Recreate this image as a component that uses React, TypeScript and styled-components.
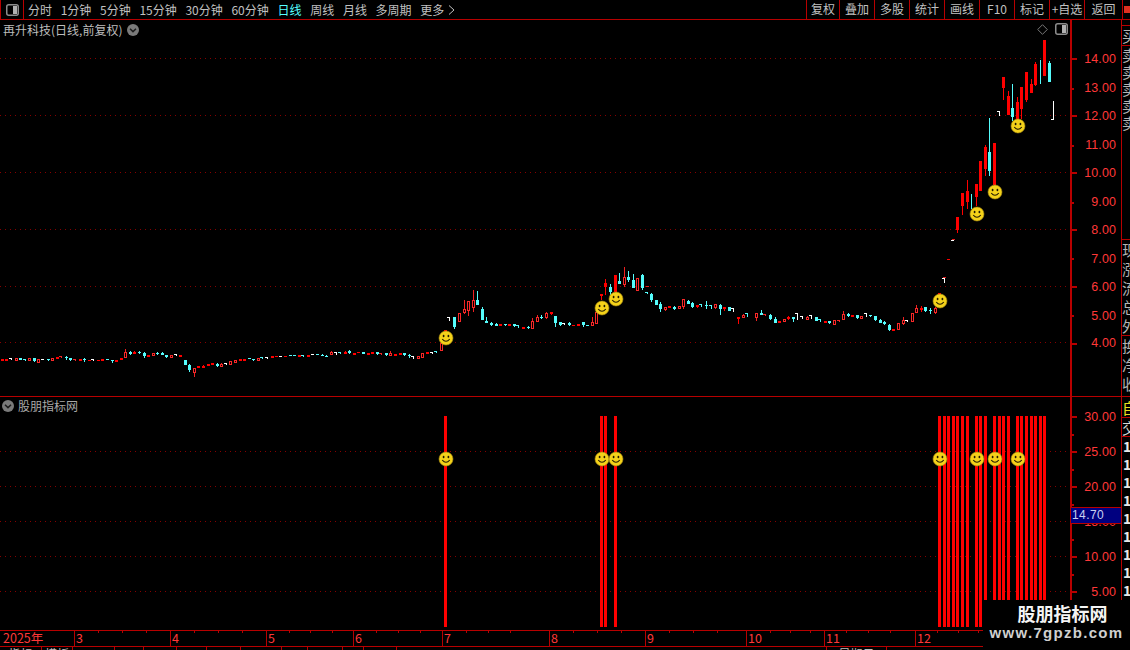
import React from 'react';
import styled, { createGlobalStyle } from 'styled-components';

const RED = '#b80000';
const CJK = '"Noto Sans CJK SC", "Liberation Sans", sans-serif';

const Global = createGlobalStyle`
  html, body { margin: 0; padding: 0; background: #000; }
`;

const Page = styled.div`
  position: relative;
  width: 1130px;
  height: 650px;
  overflow: hidden;
  background: #000;
  display: flex;
  flex-direction: column;
  font-family: ${CJK};
  color: #c0c0c0;
`;

const Toolbar = styled.div`
  height: 19px;
  flex: none;
  display: flex;
  align-items: stretch;
  border-bottom: 1px solid ${RED};
  font-size: 12px;
  line-height: 18px;
`;
const PanelToggle = styled.div`
  width: 22px;
  flex: none;
  display: flex;
  align-items: center;
  justify-content: center;
  border-left: 1px solid ${RED};
  border-right: 1px solid ${RED};
`;
const Periods = styled.div`
  display: flex;
  gap: 8.7px;
  padding-left: 4px;
`;
const Period = styled.span<{ $active?: boolean }>`
  color: ${p => (p.$active ? '#55ffff' : '#c0c0c0')};
  white-space: nowrap;
  display: flex;
  align-items: center;
  gap: 4px;
`;
const Tools = styled.div`
  margin-left: auto;
  display: flex;
`;
const Tool = styled.div<{ $w: number }>`
  width: ${p => p.$w}px;
  box-sizing: border-box;
  border-left: 1px solid ${RED};
  text-align: center;
  white-space: nowrap;
`;
const CornerCell = styled.div`
  width: 8px;
  border-left: 1px solid ${RED};
  box-sizing: border-box;
  display: flex;
  align-items: center;
  justify-content: flex-end;
`;
const CornerMark = styled.i`
  display: block;
  width: 6px;
  height: 7px;
  background: #e03020;
`;

const Pane = styled.div<{ $h: number }>`
  position: relative;
  height: ${p => p.$h}px;
  flex: none;
  display: flex;
  border-bottom: 1px solid ${RED};
`;
const Plot = styled.svg`
  width: 1070px;
  flex: none;
  height: 100%;
  display: block;
`;
const Axis = styled.svg`
  width: 49px;
  flex: none;
  height: 100%;
  display: block;
  border-left: 2px solid ${RED};
  border-right: 1px solid ${RED};
`;
const AxisLabel = styled.text`
  font-family: "Liberation Sans", sans-serif;
  font-size: 12.5px;
  letter-spacing: 0.1px;
  fill: #ff3838;
  text-anchor: end;
  dominant-baseline: central;
`;
const Legend = styled.div<{ $top: number; $left: number }>`
  position: absolute;
  top: ${p => p.$top}px;
  left: ${p => p.$left}px;
  display: flex;
  align-items: center;
  gap: 5px;
  height: 14px;
  font-size: 12px;
  line-height: 14px;
  white-space: nowrap;
  color: #bdbdbd;
`;
const LegendSub = styled(Legend)`
  gap: 4px;
  color: #a8a8a8;
`;
const CornerIcons = styled.div`
  position: absolute;
  top: 3px;
  right: 62px;
  display: flex;
  align-items: center;
  gap: 7px;
`;

const Side = styled.div`
  width: 8px;
  flex: none;
  overflow: hidden;
  display: flex;
  flex-direction: column;
`;
const SideCell = styled.div<{ $h: number; $line?: boolean; $color?: string; $size?: number; $bold?: boolean; $indent?: number }>`
  height: ${p => p.$h}px;
  flex: none;
  box-sizing: border-box;
  border-bottom: ${p => (p.$line ? `1px solid ${RED}` : 'none')};
  color: ${p => p.$color ?? '#b4b4b4'};
  font-size: ${p => p.$size ?? 15}px;
  font-weight: ${p => (p.$bold ? 700 : 400)};
  line-height: ${p => p.$h}px;
  padding-left: ${p => p.$indent ?? 0}px;
  white-space: nowrap;
`;

const PriceTag = styled.div`
  position: absolute;
  left: 1071px;
  top: 110px;
  width: 50px;
  height: 17px;
  box-sizing: border-box;
  background: #000080;
  border-top: 1px solid ${RED};
  border-bottom: 1px solid ${RED};
  color: #c8d0f0;
  font-family: "Liberation Sans", sans-serif;
  font-size: 12px;
  line-height: 15px;
  padding-left: 1px;
  letter-spacing: 0.4px;
`;

const TimeAxis = styled.svg`
  width: 1130px;
  height: 15px;
  flex: none;
  display: block;
  border-bottom: 1px solid ${RED};
`;
const TimeLabel = styled.text`
  font-family: ${CJK};
  font-size: 12.5px;
  fill: #ff3838;
`;
const Tabs = styled.div`
  height: 3px;
  flex: none;
  overflow: hidden;
  display: flex;
`;
const TabCell = styled.div<{ $w: number }>`
  width: ${p => p.$w}px;
  flex: none;
  box-sizing: border-box;
  border-right: 1px solid ${RED};
  font-size: 12px;
  line-height: 14px;
  text-align: center;
  color: #c0c0c0;
  white-space: nowrap;
  overflow: hidden;
`;

const Watermark = styled.div`
  position: absolute;
  right: 0;
  bottom: 0;
  width: 147px;
  height: 50px;
  background: #000;
  display: flex;
  flex-direction: column;
  align-items: center;
`;
const MarkName = styled.div`
  font-size: 18px;
  font-weight: 700;
  line-height: 24px;
  color: #f4f4f4;
  padding-left: 12px;
  padding-top: 1px;
`;
const MarkUrl = styled.div`
  font-family: "Liberation Sans", sans-serif;
  font-size: 15px;
  font-weight: 700;
  line-height: 17px;
  letter-spacing: 1.3px;
  color: #d0d0d0;
  margin-top: -1px;
`;

type Row = [number, number, number, number?, number?, string?];
type Candle = { x: number; t: number; b: number; wt: number; wb: number; k: string };

const seg = (ox: number, oy: number, rows: Row[]): Candle[] =>
  rows.map(([x, t, b, wt, wb, k]) => ({
    x: Math.round(ox + x / 3),
    t: Math.round(oy + t / 3),
    b: Math.round(oy + b / 3),
    wt: Math.round(oy + (wt || t) / 3),
    wb: Math.round(oy + (wb || b) / 3),
    k: k ?? 'r',
  }));

const candles: Candle[] = [
  ...seg(0, 330, [
    [7, 87, 93], [19, 87, 93], [32, 84, 90, 0, 0, 'w'], [49, 84, 93, 0, 0, 'h'], [61, 84, 90, 0, 0, 'c'],
    [75, 87, 93, 0, 0, 'k'], [88, 84, 93, 0, 0, 'h'], [103, 84, 93, 0, 96, 'c'], [115, 87, 99, 0, 0, 'h'],
    [129, 87, 90, 0, 0, 'w'], [145, 87, 90, 0, 93, 'c'], [157, 84, 93, 0, 0, 'h'], [172, 81, 87], [184, 78, 84, 0, 0, 'm'],
    [199, 81, 84, 78, 90, 'c'], [211, 84, 90, 0, 93, 'c'], [225, 87, 93, 0, 0, 'm'], [241, 87, 93], [253, 87, 90, 84, 96, 'c'],
    [266, 90, 93], [279, 87, 93, 0, 0, 'w'], [295, 90, 93], [307, 87, 93], [322, 87, 90, 0, 0, 'c'], [337, 90, 93, 0, 99, 'c'],
    [349, 90, 96], [364, 84, 90], [376, 66, 84, 57, 0, 'h'], [391, 66, 72, 63, 75, 'c'], [403, 66, 72, 63], [418, 66, 69, 63, 72, 'c'],
    [433, 69, 78, 66, 84, 'c'], [445, 75, 81], [460, 69, 78, 0, 0, 'h'], [472, 69, 72, 66, 75, 'c'], [487, 69, 75, 66, 0, 'c'],
    [499, 75, 81, 0, 84, 'c'], [514, 75, 84, 0, 0, 'h'], [528, 72, 78, 0, 0, 'w'], [541, 75, 81], [556, 90, 105, 0, 0, 'c'],
    [568, 105, 120, 102, 126, 'c'], [583, 114, 129, 0, 141, 'h'], [595, 108, 114], [610, 108, 114, 105], [625, 102, 108],
    [637, 99, 105], [652, 102, 108, 99, 111, 'c'], [664, 102, 111, 99, 0, 'h'], [678, 99, 105, 0, 0, 'w'], [691, 93, 105, 0, 0, 'h'], [706, 90, 99, 0, 0, 'h'],
  ]),
  ...seg(240, 330, [
    [0, 87, 93], [13, 87, 93], [27, 84, 87, 0, 0, 'c'], [40, 87, 90, 0, 93, 'c'], [55, 84, 93, 0, 0, 'h'], [67, 81, 87, 0, 0, 'k'],
    [81, 81, 87, 0, 0, 'w'], [97, 78, 84], [108, 78, 81], [123, 78, 81, 0, 0, 'w'], [135, 78, 81], [151, 75, 78, 0, 0, 'c'], [163, 75, 78, 0, 0, 'c'],
    [178, 75, 81], [190, 75, 81, 0, 0, 'k'], [205, 75, 81], [219, 72, 75, 0, 0, 'w'], [231, 72, 75, 0, 0, 'c'], [246, 75, 78, 72, 0, 'c'],
    [259, 78, 81, 75, 0, 'c'], [274, 66, 75, 63, 0, 'h'], [288, 66, 75, 0, 0, 'w'], [299, 66, 72, 0, 0, 'k'], [316, 66, 72, 63], [328, 63, 69, 60, 72, 'c'],
    [343, 69, 75], [353, 66, 69], [370, 66, 72, 0, 0, 'c'], [385, 69, 75], [397, 66, 72], [412, 66, 72, 66, 75, 'c'], [423, 69, 75, 0, 0, 'm'],
    [439, 69, 75, 0, 78, 'c'], [451, 69, 78, 63, 0, 'h'], [466, 72, 78], [481, 69, 75], [493, 69, 75, 0, 78, 'c'], [508, 75, 78, 72, 84, 'c'],
    [519, 78, 87, 0, 0, 'w'], [535, 78, 87, 0, 0, 'h'], [547, 69, 84, 0, 0, 'h'], [562, 66, 72], [576, 66, 72, 0, 0, 'w'], [588, 63, 69, 0, 0, 'k'],
  ]),
  ...seg(430, 260, [
    [34, 250, 272, 0, 0, 'h'], [46, 210, 216], [58, 171, 183, 0, 0, 'w'], [73, 171, 201, 0, 207, 'c'], [88, 159, 186, 0, 0, 'h'],
    [103, 147, 159, 120, 162, 'h'], [115, 123, 153, 0, 168, 'h'], [130, 120, 144, 90, 156, 'h'], [142, 120, 135, 93, 0, 'c'], [157, 147, 180, 141, 0, 'c'],
    [169, 183, 189, 171, 0, 'c'], [184, 189, 195, 186, 198, 'c'], [199, 192, 198, 189, 0, 'c'], [211, 192, 198], [226, 192, 195, 0, 198, 'c'],
    [238, 192, 198], [253, 192, 198, 0, 201, 'c'], [264, 195, 204, 0, 0, 'k'], [280, 201, 207], [295, 201, 204, 198, 207, 'c'], [307, 183, 207, 174, 0, 'h'],
    [322, 171, 186, 165, 0, 'h'], [334, 171, 174, 165, 177, 'c'], [349, 159, 174, 156, 177, 'h'], [364, 156, 162, 0, 165], [376, 168, 189, 0, 201, 'c'],
    [391, 186, 195, 0, 198, 'c'], [403, 189, 195, 0, 0, 'w'], [418, 189, 195, 186, 198, 'c'], [430, 195, 198], [445, 192, 198], [460, 186, 195, 0, 201, 'c'],
    [472, 195, 198, 0, 0, 'c'], [487, 186, 198, 171, 0, 'h'], [499, 156, 192, 150, 0, 'h'], [514, 102, 108, 0, 120], [526, 69, 81, 57, 105],
    [541, 81, 96, 72, 105, 'c'], [556, 45, 96], [568, 63, 72, 39, 0, 'c'], [583, 51, 75, 21, 81, 'h'], [595, 51, 60, 33, 66, 'c'], [610, 60, 84, 42, 0, 'c'],
    [622, 54, 93, 0, 0, 'h'], [637, 45, 84, 42, 90, 'c'], [652, 96, 102, 78, 0, 'k'], [664, 102, 120, 99, 126, 'c'], [679, 120, 135, 0, 0, 'c'],
    [691, 132, 147, 126, 156, 'c'], [706, 141, 150, 0, 153, 'h'], [718, 138, 144],
  ]),
  ...seg(670, 280, [
    [13, 81, 87, 78, 90, 'c'], [28, 78, 87, 0, 0, 'h'], [40, 57, 81, 0, 87, 'h'], [55, 63, 72, 60, 0, 'c'], [67, 69, 81, 66, 84, 'c'], [82, 75, 81, 0, 84],
    [94, 72, 81, 0, 0, 'k'], [109, 75, 78, 63, 87, 'c'], [122, 75, 87, 0, 0, 'k'], [136, 72, 84, 0, 87, 'h'], [151, 75, 87, 72, 105, 'c'], [163, 81, 87, 0, 93],
    [178, 81, 93, 0, 0, 'c'], [188, 84, 96, 0, 0, 'w'], [205, 111, 117, 0, 132], [220, 105, 114, 102, 0, 'h'], [231, 99, 111, 0, 0, 'k'], [259, 99, 114, 0, 123, 'h'],
    [274, 99, 105, 90, 0, 'c'], [285, 102, 108, 0, 0, 'm'], [301, 105, 117, 102, 120, 'c'], [316, 117, 129, 111, 0, 'c'], [328, 123, 129], [343, 117, 126, 0, 0, 'h'],
    [355, 111, 117, 108, 120], [370, 111, 117, 0, 126, 'c'], [381, 99, 120, 0, 0, 'w'], [396, 108, 117, 0, 0, 'w'], [412, 111, 120, 108, 0, 'h'], [423, 105, 117, 0, 0, 'w'],
    [439, 111, 123, 0, 0, 'c'], [450, 117, 126, 0, 0, 'k'], [466, 123, 129], [478, 123, 129, 0, 132, 'c'], [493, 120, 135, 0, 0, 'h'], [506, 120, 126, 0, 0, 'm'],
    [520, 102, 120, 93, 0, 'h'], [535, 102, 108, 99, 111, 'c'], [547, 105, 111], [562, 105, 114, 0, 117, 'c'], [574, 108, 117, 0, 0, 'h'], [588, 99, 111, 0, 0, 'w'],
    [601, 105, 108, 0, 111, 'c'], [616, 108, 120, 0, 123, 'c'], [631, 120, 129, 117, 0, 'c'], [643, 126, 132, 123, 135, 'c'], [658, 135, 150, 132, 153, 'c'], [670, 147, 153],
    [685, 129, 150, 0, 0, 'h'], [700, 120, 132, 111, 135, 'h'], [711, 120, 126, 0, 0, 'w'], [727, 99, 126, 0, 0, 'h'], [739, 84, 99, 75, 0, 'h'], [754, 84, 90, 78, 96],
    [766, 81, 93, 0, 96, 'c'], [781, 90, 93, 84, 102, 'c'], [796, 84, 99, 81, 102, 'h'],
  ]),
  ...seg(920, 150, [
    [58, 429, 435], [73, 384, 399, 381, 0, 'w'], [85, 327, 330], [100, 270, 273, 267, 0, 'w'], [112, 201, 240, 0, 249], [127, 129, 168, 0, 195],
    [142, 123, 156, 90, 177], [154, 132, 177, 0, 0, 't'], [169, 102, 141, 0, 168], [181, 33, 123], [196, -9, 57, -15, 78], [208, 6, 63, -96, 78, 'c'], [223, -21, 105],
  ]),
  ...seg(920, 30, [
    [238, 243, 258, 0, 0, 'w'], [250, 141, 174, 0, 210], [265, 198, 255, 183, 0], [277, 234, 261, 162, 273, 'c'], [292, 216, 270, 201, 0], [304, 171, 237, 0, 267],
    [319, 126, 210, 0, 216], [334, 162, 189, 147, 0], [346, 102, 165, 96, 168], [361, 90, 162, 0, 0, 't'], [373, 30, 138], [388, 99, 156, 93, 0, 'c'], [400, 213, 270, 0, 0, 'W'],
  ]),
];

const CandleMark: React.FC<{ c: Candle }> = ({ c }) => {
  const { x, t, k } = c;
  const b = Math.max(c.b, t + 1);
  const h = b - t;
  if (k === 'w' || k === 'W' || k === 'k' || k === 'm' || k === 't') {
    const col = k === 'k' || k === 't' ? '#55fcfc' : k === 'm' ? '#f02828' : '#ffffff';
    return (
      <g fill={col}>
        <rect x={x} y={t} width={1} height={h} />
        {k !== 't' && <rect x={x - 2} y={k === 'W' ? b - 1 : t} width={2} height={1} />}
        {c.wt < t && <rect x={x - 1} y={c.wt} width={3} height={1} fill="#e82020" />}
      </g>
    );
  }
  if (k === 'h') {
    return (
      <g>
        <rect x={x} y={c.wt} width={1} height={c.wb - c.wt} fill="#f02020" />
        <rect x={x - 0.5} y={t + 0.5} width={2} height={Math.max(h - 1, 1)} fill="#000" stroke="#f82828" strokeWidth={1} />
      </g>
    );
  }
  const col = k === 'c' ? '#55fcfc' : '#ff0000';
  return (
    <g fill={col}>
      <rect x={x} y={c.wt} width={1} height={c.wb - c.wt} />
      <rect x={x - 1} y={t} width={3} height={h} />
    </g>
  );
};

const Smile: React.FC<{ x: number; y: number }> = ({ x, y }) => (
  <g transform={`translate(${x} ${y})`} shapeRendering="auto">
    <circle r={7} fill="#f4d21a" stroke="#a88c10" strokeWidth={0.6} />
    <ellipse cx={-2.4} cy={-2} rx={0.9} ry={1.3} fill="#221a00" />
    <ellipse cx={2.4} cy={-2} rx={0.9} ry={1.3} fill="#221a00" />
    <path d="M-3.8 1 Q0 5.6 3.8 1" fill="none" stroke="#221a00" strokeWidth={1.1} />
  </g>
);

const GridLine: React.FC<{ y: number }> = ({ y }) => (
  <line x1={0} x2={1070} y1={y + 0.5} y2={y + 0.5} stroke="#860000" strokeWidth={1} strokeDasharray="1 4" />
);

const ChevronBadge: React.FC = () => (
  <svg width="12" height="12" viewBox="0 0 12 12">
    <circle cx="6" cy="6" r="6" fill="#7a7a7a" />
    <path d="M3 4.8 L6 7.6 L9 4.8" fill="none" stroke="#1c1c1c" strokeWidth="1.5" />
  </svg>
);

const PanelIcon: React.FC = () => (
  <svg width="13" height="12" viewBox="0 0 13 12">
    <rect x="0.75" y="0.75" width="11.5" height="10.5" rx="2" fill="none" stroke="#8c8c8c" strokeWidth="1.5" />
    <rect x="7" y="2" width="4" height="8" fill="#b0b0b0" />
  </svg>
);

const mainAxis: [string, number, number][] = [
  ['14.00', 59, 58], ['13.00', 88, 88], ['12.00', 116, 115], ['11.00', 145, 145], ['10.00', 173, 172], ['9.00', 202, 202],
  ['8.00', 230, 229], ['7.00', 259, 258], ['6.00', 287, 286], ['5.00', 316, 315], ['4.00', 343, 343],
];
const subAxis: [string, number][] = [['30.00', 417], ['25.00', 452], ['20.00', 487], ['15.00', 522], ['10.00', 557], ['5.00', 592]];
const subMinor = [434, 469, 504, 539, 574];
const bars = [444, 600, 604, 614, 938, 943, 947, 952, 956, 961, 966, 975, 979, 984, 993, 998, 1002, 1007, 1016, 1020, 1025, 1030, 1034, 1039, 1043];
const smilesMain: [number, number][] = [[446, 338], [602, 308], [616, 299], [940, 301], [977, 214], [995, 192], [1018, 126]];
const smilesSub = [446, 602, 616, 940, 977, 995, 1018];

const months: [string, number][] = [['3', 74], ['4', 170], ['5', 266], ['6', 353], ['7', 442], ['8', 549], ['9', 645], ['10', 746], ['11', 824], ['12', 915]];
const weekTicks = [98, 122, 146, 194, 218, 242, 289, 310, 332, 376, 398, 420, 466, 488, 510, 573, 597, 621, 669, 693, 717, 770, 790, 810, 846, 868, 890, 937, 958, 978];

const tabs: [string, number][] = [['指标', 42], ['模板', 31], ['', 42], ['', 29], ['', 33], ['', 30], ['', 34], ['', 41], ['', 26], ['', 35], ['', 21], ['', 33], ['', 430], ['星期日', 60]];

const askRows = ['卖', '卖', '卖', '卖', '卖'];
const infoRows = ['现', '涨', '流', '总', '外'];
const lowerRows = ['换', '净', '收'];

export default function App() {
  return (
    <Page>
      <Global />
      <Toolbar>
        <PanelToggle><PanelIcon /></PanelToggle>
        <Periods>
          <Period>分时</Period>
          <Period>1分钟</Period>
          <Period>5分钟</Period>
          <Period>15分钟</Period>
          <Period>30分钟</Period>
          <Period>60分钟</Period>
          <Period $active>日线</Period>
          <Period>周线</Period>
          <Period>月线</Period>
          <Period>多周期</Period>
          <Period>
            更多
            <svg width="7" height="10" viewBox="0 0 7 10"><path d="M1 0.5 L6 5 L1 9.5" fill="none" stroke="#c0c0c0" /></svg>
          </Period>
        </Periods>
        <Tools>
          <Tool $w={33}>复权</Tool>
          <Tool $w={35}>叠加</Tool>
          <Tool $w={35}>多股</Tool>
          <Tool $w={35}>统计</Tool>
          <Tool $w={35}>画线</Tool>
          <Tool $w={35}>F10</Tool>
          <Tool $w={35}>标记</Tool>
          <Tool $w={35}>+自选</Tool>
          <Tool $w={38}>返回</Tool>
          <CornerCell><CornerMark /></CornerCell>
        </Tools>
      </Toolbar>

      <Pane $h={376}>
        <Plot viewBox="0 20 1070 376" shapeRendering="crispEdges">
          {[58, 115, 172, 229, 286, 342].map(y => <GridLine key={y} y={y} />)}
          {candles.map((c, i) => <CandleMark key={i} c={c} />)}
          {smilesMain.map(([x, y]) => <Smile key={x} x={x} y={y} />)}
        </Plot>
        <Axis viewBox="1072 20 49 376" shapeRendering="crispEdges">
          {mainAxis.map(([label, ly, ty], i) => (
            <g key={label}>
              <rect x={1072} y={ty} width={i % 2 ? 2 : 5} height={2} fill={RED} />
              <AxisLabel x={1116} y={ly - 0.5}>{label}</AxisLabel>
            </g>
          ))}
        </Axis>
        <Side>
          <SideCell $h={6} $line />
          <SideCell $h={20} $line>买</SideCell>
          {askRows.map((t, i) => <SideCell key={i} $h={17}>{t}</SideCell>)}
          <SideCell $h={109} $line />
          {infoRows.map((t, i) => <SideCell key={i} $h={19}>{t}</SideCell>)}
          <SideCell $h={1} $line />
          {lowerRows.map((t, i) => <SideCell key={i} $h={19}>{t}</SideCell>)}
        </Side>
        <Legend $top={3} $left={3}>
          <span>再升科技(日线,前复权)</span>
          <ChevronBadge />
        </Legend>
        <CornerIcons>
          <svg width="11" height="11" viewBox="0 0 11 11"><path d="M5.5 0.7 L10.3 5.5 L5.5 10.3 L0.7 5.5 Z" fill="none" stroke="#777" /></svg>
          <PanelIcon />
        </CornerIcons>
      </Pane>

      <Pane $h={233}>
        <Plot viewBox="0 397 1070 233" shapeRendering="crispEdges">
          {[451, 486, 521, 556, 591].map(y => <GridLine key={y} y={y} />)}
          {bars.map(x => <rect key={x} x={x} y={416} width={3} height={211} fill="#ff0000" />)}
          {smilesSub.map(x => <Smile key={x} x={x} y={459} />)}
        </Plot>
        <Axis viewBox="1072 397 49 233" shapeRendering="crispEdges">
          {subAxis.map(([label, y]) => (
            <g key={label}>
              <rect x={1072} y={y - 1} width={5} height={2} fill={RED} />
              <AxisLabel x={1116} y={y}>{label}</AxisLabel>
            </g>
          ))}
          {subMinor.map(y => <rect key={y} x={1072} y={y} width={2} height={2} fill={RED} />)}
        </Axis>
        <Side>
          <SideCell $h={21} $line $color="#e8e020">自</SideCell>
          <SideCell $h={19} $line $color="#d8d8d8">交</SideCell>
          {[0, 1, 2, 3, 4, 5, 6, 7, 8].map(i => <SideCell key={i} $h={18} $size={14} $bold $indent={1} $color="#e8e8e8">1</SideCell>)}
        </Side>
        <LegendSub $top={2} $left={2}>
          <ChevronBadge />
          <span>股朋指标网</span>
        </LegendSub>
        <PriceTag>14.70</PriceTag>
      </Pane>

      <TimeAxis viewBox="0 631 1130 15" shapeRendering="crispEdges">
        <TimeLabel x={3} y={643}>2025年</TimeLabel>
        {months.map(([m, x]) => (
          <g key={m}>
            <rect x={x} y={631} width={1} height={15} fill={RED} />
            <TimeLabel x={x + 2} y={643}>{m}</TimeLabel>
          </g>
        ))}
        {weekTicks.map(x => <rect key={x} x={x} y={631} width={1} height={2} fill={RED} />)}
      </TimeAxis>

      <Tabs>
        {tabs.map(([t, w], i) => <TabCell key={i} $w={w}>{t}</TabCell>)}
      </Tabs>

      <Watermark>
        <MarkName>股朋指标网</MarkName>
        <MarkUrl>www.7gpzb.com</MarkUrl>
      </Watermark>
    </Page>
  );
}
